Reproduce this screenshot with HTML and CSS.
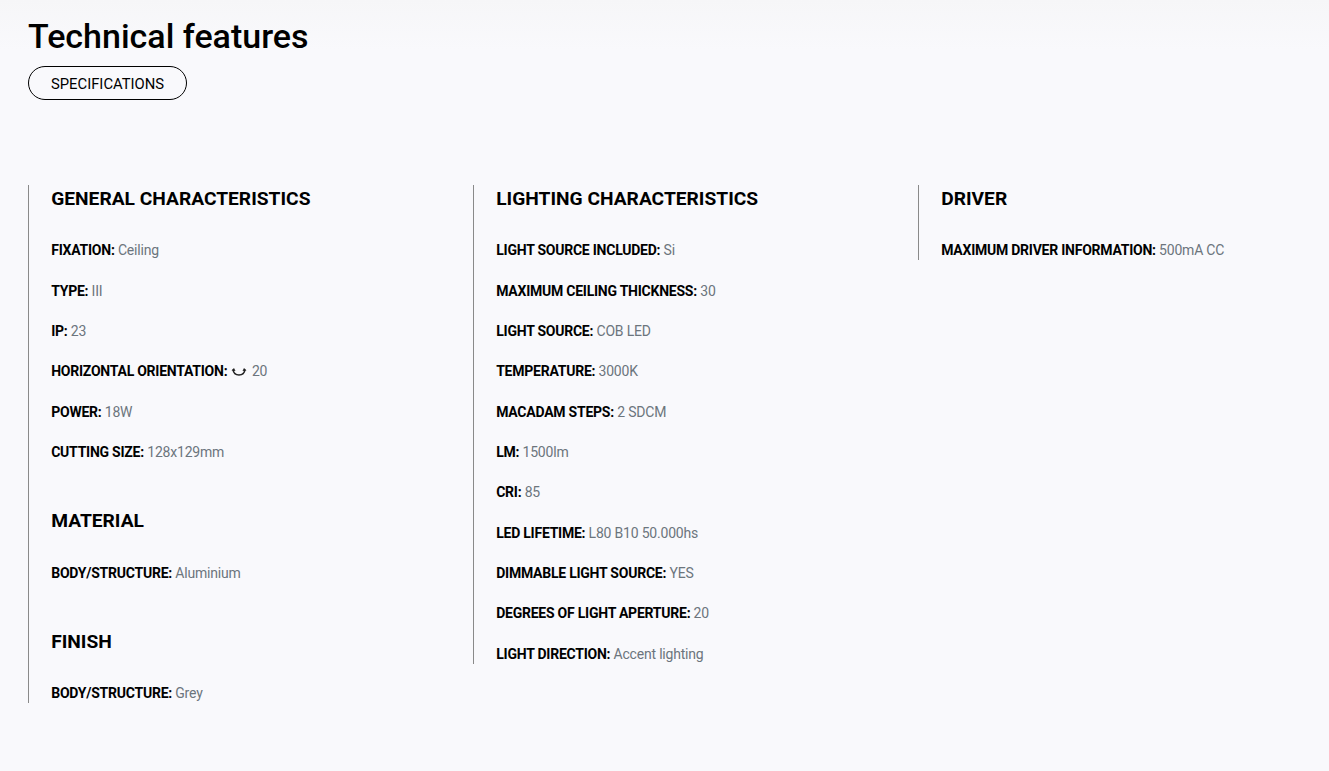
FILE: index.html
```html
<!DOCTYPE html>
<html lang="en">
<head>
<meta charset="utf-8">
<title>Technical features</title>
<link rel="stylesheet" href="styles.css">
</head>
<body>
<main class="page">
  <h1 class="title">Technical features</h1>
  <a class="pill">SPECIFICATIONS</a>
  <div class="cols">
    <section class="col">
      <h2 class="head">GENERAL CHARACTERISTICS</h2>
      <ul class="list">
        <li><b>FIXATION:</b> Ceiling</li>
        <li><b>TYPE:</b> III</li>
        <li><b>IP:</b> 23</li>
        <li><b>HORIZONTAL ORIENTATION:</b> <svg class="ico" viewBox="0 0 16 10" width="16" height="10"><path d="M2 2.500C2.500 6 5 8 8 8s5.500-2 6-5.500" fill="none" stroke="#222" stroke-width="1.600"/><path d="M0.500 3.500L3 1L4.500 4ZM15.500 3.500L13 1L11.500 4Z" fill="#222"/></svg> 20</li>
        <li><b>POWER:</b> 18W</li>
        <li><b>CUTTING SIZE:</b> 128x129mm</li>
      </ul>
      <h2 class="head sub">MATERIAL</h2>
      <ul class="list">
        <li><b>BODY/STRUCTURE:</b> Aluminium</li>
      </ul>
      <h2 class="head sub">FINISH</h2>
      <ul class="list">
        <li><b>BODY/STRUCTURE:</b> Grey</li>
      </ul>
    </section>
    <section class="col">
      <h2 class="head">LIGHTING CHARACTERISTICS</h2>
      <ul class="list">
        <li><b>LIGHT SOURCE INCLUDED:</b> Si</li>
        <li><b>MAXIMUM CEILING THICKNESS:</b> 30</li>
        <li><b>LIGHT SOURCE:</b> COB LED</li>
        <li><b>TEMPERATURE:</b> 3000K</li>
        <li><b>MACADAM STEPS:</b> 2 SDCM</li>
        <li><b>LM:</b> 1500lm</li>
        <li><b>CRI:</b> 85</li>
        <li><b>LED LIFETIME:</b> L80 B10 50.000hs</li>
        <li><b>DIMMABLE LIGHT SOURCE:</b> YES</li>
        <li><b>DEGREES OF LIGHT APERTURE:</b> 20</li>
        <li><b>LIGHT DIRECTION:</b> Accent lighting</li>
      </ul>
    </section>
    <section class="col">
      <h2 class="head">DRIVER</h2>
      <ul class="list">
        <li><b>MAXIMUM DRIVER INFORMATION:</b> 500mA CC</li>
      </ul>
    </section>
  </div>
</main>
</body>
</html>
```
FILE: styles.css
```css
* { box-sizing: border-box; }
html, body { margin: 0; padding: 0; }
body {
  height: 771px;
  overflow: hidden;
  background: linear-gradient(#f6f6f8, #f9f9fc 50px);
  font-family: Roboto, "Liberation Sans", sans-serif;
  color: #000;
}
.page { padding: 16px 28px 0; }
.title {
  margin: 0;
  font-size: 34px;
  line-height: 40px;
  font-weight: 500;
}
.pill {
  display: block;
  width: 159px;
  height: 34px;
  margin-top: 10px;
  border: 1px solid #000;
  border-radius: 17px;
  font-size: 14.800px;
  line-height: 34px;
  padding-left: 22px;
}
.cols {
  display: flex;
  align-items: flex-start;
  margin-top: 85px;
}
.col {
  flex: 0 0 445px;
  border-left: 1px solid #8a8a8a;
  padding-left: 22.200px;
}
.head {
  margin: 0;
  font-size: 19.200px;
  line-height: 28px;
  font-weight: 700;
}
.head.sub { margin-top: 45px; }
.list {
  list-style: none;
  margin: 27.300px 0 0;
  padding: 0;
  display: flex;
  flex-direction: column;
  gap: 20.340px;
  font-size: 14px;
  line-height: 20px;
  color: #6c757d;
  letter-spacing: -0.200px;
}
.sub + .list { margin-top: 27.700px; }
.list b { color: #000; font-weight: 700; letter-spacing: -0.240px; }
.ico { vertical-align: -1px; margin: 0 2px 0 0; }
```
